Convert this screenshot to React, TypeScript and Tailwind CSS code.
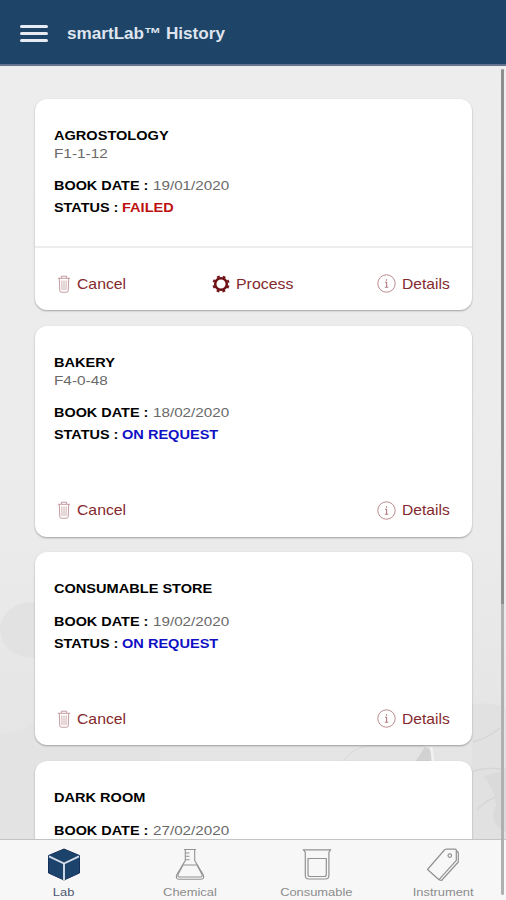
import React from "react";

type Booking = {
  name: string;
  room?: string;
  date: string;
  status?: string;
  failed?: boolean;
};

const bookings: Booking[] = [
  { name: "AGROSTOLOGY", room: "F1-1-12", date: "19/01/2020", status: "FAILED", failed: true },
  { name: "BAKERY", room: "F4-0-48", date: "18/02/2020", status: "ON REQUEST" },
  { name: "CONSUMABLE STORE", date: "19/02/2020", status: "ON REQUEST" },
  { name: "DARK ROOM", date: "27/02/2020" },
];

function TrashIcon() {
  return (
    <svg width="14" height="18" viewBox="0 0 14 18" fill="none" stroke="#c39a9e" strokeWidth="1">
      <path d="M.8 3.3h12.4M4.3 3V1.2h5.4V3M2.3 3.5l.5 12.3q.1 1.4 1.5 1.4h5.4q1.4 0 1.5-1.4l.5-12.3" />
      <path d="M4.8 5.5l.2 9.5M7 5.5V15M9.2 5.5L9 15" strokeWidth=".8" />
    </svg>
  );
}

function GearIcon() {
  return (
    <svg width="18" height="18" viewBox="0 0 18 18" fill="none" stroke="#6e1014">
      <circle cx="9" cy="9" r="5.8" strokeWidth="2.5" />
      <circle cx="9" cy="9" r="7.6" strokeWidth="2" strokeDasharray="2.8 3.169" strokeDashoffset="-1.6" />
    </svg>
  );
}

function InfoIcon() {
  return (
    <svg width="19" height="19" viewBox="0 0 19 19" fill="none" stroke="#b27c80">
      <circle cx="9.5" cy="9.5" r="8.7" strokeWidth=".9" />
      <path d="M9.5 5.3v1.5M8 8.3h1.6v5M7.8 13.3h3.5" strokeWidth="1.1" />
    </svg>
  );
}

function Card({ item }: { item: Booking }) {
  return (
    <article
      className={`flex w-[437px] shrink-0 flex-col rounded-[12px] bg-white shadow-[0_1px_2px_rgba(0,0,0,0.32)] ${
        item.room ? "h-[211px]" : "h-[193px]"
      }`}
    >
      <div className={`px-[19px] pt-[28px] text-[13px] text-black ${item.room ? "h-[147px]" : "h-[129px]"}`}>
        <h2 className="h-[17px] w-max origin-left scale-x-[1.12] font-bold leading-[18px]">{item.name}</h2>
        {item.room && (
          <p className="h-[18px] w-max origin-left scale-x-[1.18] leading-[19px] text-[#696969]">{item.room}</p>
        )}
        <p className={`flex h-[22px] leading-[22px] ${item.room ? "mt-[13px]" : "mt-[14px]"}`}>
          <b className="w-[99px] origin-left scale-x-[1.11] whitespace-nowrap">BOOK DATE :</b>
          <span className="origin-left scale-x-[1.17] text-[#696969]">{item.date}</span>
        </p>
        {item.status && (
          <p className="flex h-[22px] font-bold leading-[22px]">
            <span className="w-[68px] origin-left scale-x-[1.11] whitespace-nowrap">STATUS :</span>
            <span className={`origin-left scale-x-[1.12] ${item.failed ? "text-[#bd1010]" : "text-[#1010c4]"}`}>
              {item.status}
            </span>
          </p>
        )}
      </div>
      {item.status && (
        <div
          className={`flex h-[64px] items-center justify-between border-t-2 pl-[22px] pr-[24px] pt-[9px] text-[15px] leading-5 text-[#84292d] ${
            item.failed ? "border-[#ededed]" : "border-transparent"
          }`}
        >
          <span className="flex items-center gap-[6px]">
            <TrashIcon />
            <span className="origin-left scale-x-[1.05]">Cancel</span>
          </span>
          {item.failed && (
            <span className="flex items-center gap-[6px] pl-[2px]">
              <GearIcon />
              <span className="origin-left scale-x-[1.06]">Process</span>
            </span>
          )}
          <span className="flex items-center gap-[6px]">
            <InfoIcon />
            <span className="origin-left scale-x-[1.04]">Details</span>
          </span>
        </div>
      )}
    </article>
  );
}

function CubeIcon() {
  return (
    <svg width="34" height="33" viewBox="0 0 34 33">
      <path d="M17 1L32.5 7.5V25L17 32L1.5 25V7.5Z" fill="#1c436b" stroke="#17305a" strokeWidth="1" strokeLinejoin="round" />
      <path d="M2 8.3L17 15.5L32 8.3M17 15.5V32" fill="none" stroke="#d5deea" strokeWidth="1.9" />
    </svg>
  );
}

function FlaskIcon() {
  return (
    <svg width="34" height="33" viewBox="0 0 34 33" fill="none" stroke="#929292" strokeWidth="1.1">
      <path d="M11 1.5h12M12.3 2v10.5L3.8 26.7q-1.5 4.5 2.2 4.6h22q3.7-.1 2.2-4.6L21.7 12.5V2" />
      <path d="M12.5 5h4M12.5 8.3h4M12.5 11.7h4M10 17h14l5 9.5q.8 2.4-1.5 2.5h-21q-2.3-.1-1.5-2.5z" />
    </svg>
  );
}

function BeakerIcon() {
  return (
    <svg width="34" height="33" viewBox="0 0 34 33" fill="none" stroke="#929292" strokeWidth="1.2">
      <path d="M3.5 1.8h27l-1.6 2.6v22.8q0 3.8-3.5 3.8H8.7q-3.4 0-3.4-3.8V4.4Z" />
      <path d="M8 10.5h18.3v16q0 2-2 2H10q-2 0-2-2z" />
    </svg>
  );
}

function TagIcon() {
  return (
    <svg width="34" height="33" viewBox="0 0 34 33" fill="none" stroke="#929292" strokeWidth="1.2" strokeLinejoin="round">
      <path d="M1.5 21.5L18.4 2q1-1 2.5-1l8.4.2q1 .1 1 1v10.2L13 31.7Z" />
      <path d="M30.3 2.5l2 2v9.5L15.5 32.5L13 31.7" />
      <circle cx="23.8" cy="7.6" r="1.8" />
    </svg>
  );
}

const tabs = [
  { label: "Lab", Icon: CubeIcon },
  { label: "Chemical", Icon: FlaskIcon },
  { label: "Consumable", Icon: BeakerIcon },
  { label: "Instrument", Icon: TagIcon },
];

function Backdrop() {
  return (
    <svg className="absolute inset-0" width="506" height="774" viewBox="0 66 506 774">
      <defs>
        <linearGradient id="page" x1="0" y1="0" x2="0" y2="1">
          <stop offset="0" stopColor="#ededed" />
          <stop offset=".6" stopColor="#ebebeb" />
          <stop offset="1" stopColor="#e2e2e2" />
        </linearGradient>
      </defs>
      <rect y="66" width="506" height="774" fill="url(#page)" />
      <ellipse cx="32" cy="630" rx="32" ry="28" fill="#e2e2e2" />
      <path d="M0 734Q22 735 36 720V747H160V762H36V840H0Z" fill="#e3e3e3" />
      <path d="M343 762Q352 747 369 746H424L437 764Z" fill="#e4e4e4" stroke="#d9d9d9" />
      <path d="M415 762L425 747L431 750V762Z" fill="#d2d2d2" />
      <path d="M431 747L434 764" stroke="#f2f2f2" strokeWidth="2.5" />
      <path d="M472 705Q490 701 506 708V840H472Z" fill="#e1e1e1" />
      <path d="M473 742Q488 738 500 728M473 771Q490 766 506 770M477 810Q486 800 500 795" fill="none" stroke="#d6d6d6" strokeWidth="1.5" />
      <path d="M484 776Q495 790 496 805Q487 823 506 832V770Z" fill="#dadada" />
    </svg>
  );
}

export default function App() {
  return (
    <div className="relative flex h-[900px] w-[506px] flex-col overflow-hidden bg-[#ededed] font-['Liberation_Sans',Arial,sans-serif]">
      <header className="flex h-[66px] shrink-0 items-center border-b-2 border-[#64738f] bg-[#1e4467] pl-5 pt-[2px]">
        <div className="flex w-[28px] flex-col gap-[4px]">
          <i className="h-[3px] rounded-sm bg-[#e7ebf3]" />
          <i className="h-[3px] rounded-sm bg-[#e7ebf3]" />
          <i className="h-[3px] rounded-sm bg-[#e7ebf3]" />
        </div>
        <h1 className="ml-[19px] mt-[2px] origin-left scale-x-[1.07] text-[16px] font-bold leading-5 text-[#dfe5ef]">
          smartLab™ History
        </h1>
      </header>
      <main className="relative h-[773px] shrink-0 overflow-hidden">
        <Backdrop />
        <div className="relative flex flex-col gap-[15.5px] pl-[35px] pt-[33px]">
          {bookings.map((item) => (
            <Card key={item.name} item={item} />
          ))}
        </div>
      </main>
      <nav className="grid h-[61px] shrink-0 grid-cols-4 border-t border-[#c4c4c4] bg-[#f7f7f7]">
        {tabs.map(({ label, Icon }, index) => (
          <div key={label} className="flex flex-col items-center pl-px pt-[8px]">
            <Icon />
            <span
              className={`mt-[4px] scale-x-[1.12] text-[11.5px] leading-[14px] ${
                index === 0 ? "text-[#4a5570]" : "text-[#8c8c8c]"
              }`}
            >
              {label}
            </span>
          </div>
        ))}
      </nav>
      <div className="absolute right-[2px] top-[69px] flex h-[826px] w-[3px] flex-col rounded-full bg-[#b0b0b0]">
        <i className="h-[535px] rounded-t-full bg-[#8e8e8e]" />
      </div>
    </div>
  );
}
